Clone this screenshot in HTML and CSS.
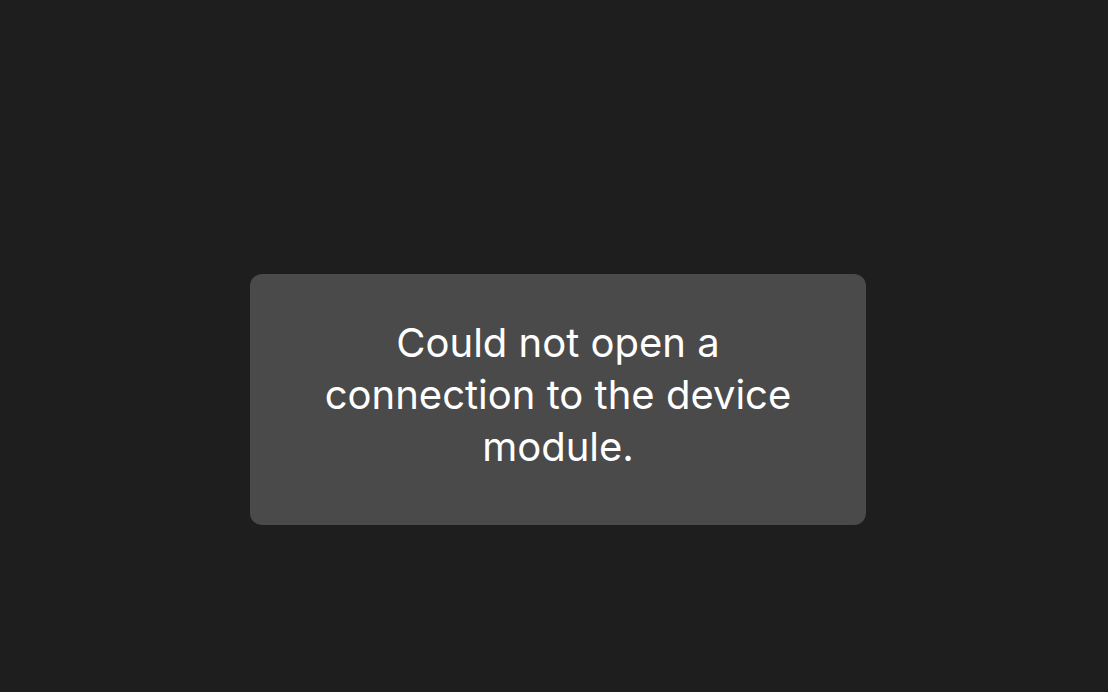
FILE: index.html
```html
<!DOCTYPE html>
<html>
<head>
<meta charset="utf-8">
<link rel="stylesheet" href="styles.css">
</head>
<body>
<div class="screen">
  <div class="toast">
    <p class="message">Could not open a connection to the device module.</p>
  </div>
</div>
</body>
</html>
```
FILE: styles.css
```css
html, body {
  margin: 0;
  padding: 0;
  background: #1e1e1e;
  height: 100%;
}
.screen {
  height: 692px;
  display: flex;
  flex-direction: column;
  align-items: center;
  padding-top: 274px;
  box-sizing: border-box;
}
.toast {
  width: 616px;
  height: 251px;
  box-sizing: border-box;
  margin-left: 8px;
  background: #4a4a4a;
  border-radius: 12px;
  padding: 0 64px;
  display: flex;
  align-items: center;
  justify-content: center;
}
.message {
  margin: 0;
  margin-top: -10px;
  color: #ffffff;
  font-family: "Inter", "Noto Sans", sans-serif;
  font-size: 40px;
  line-height: 52px;
  text-align: center;
}
```
